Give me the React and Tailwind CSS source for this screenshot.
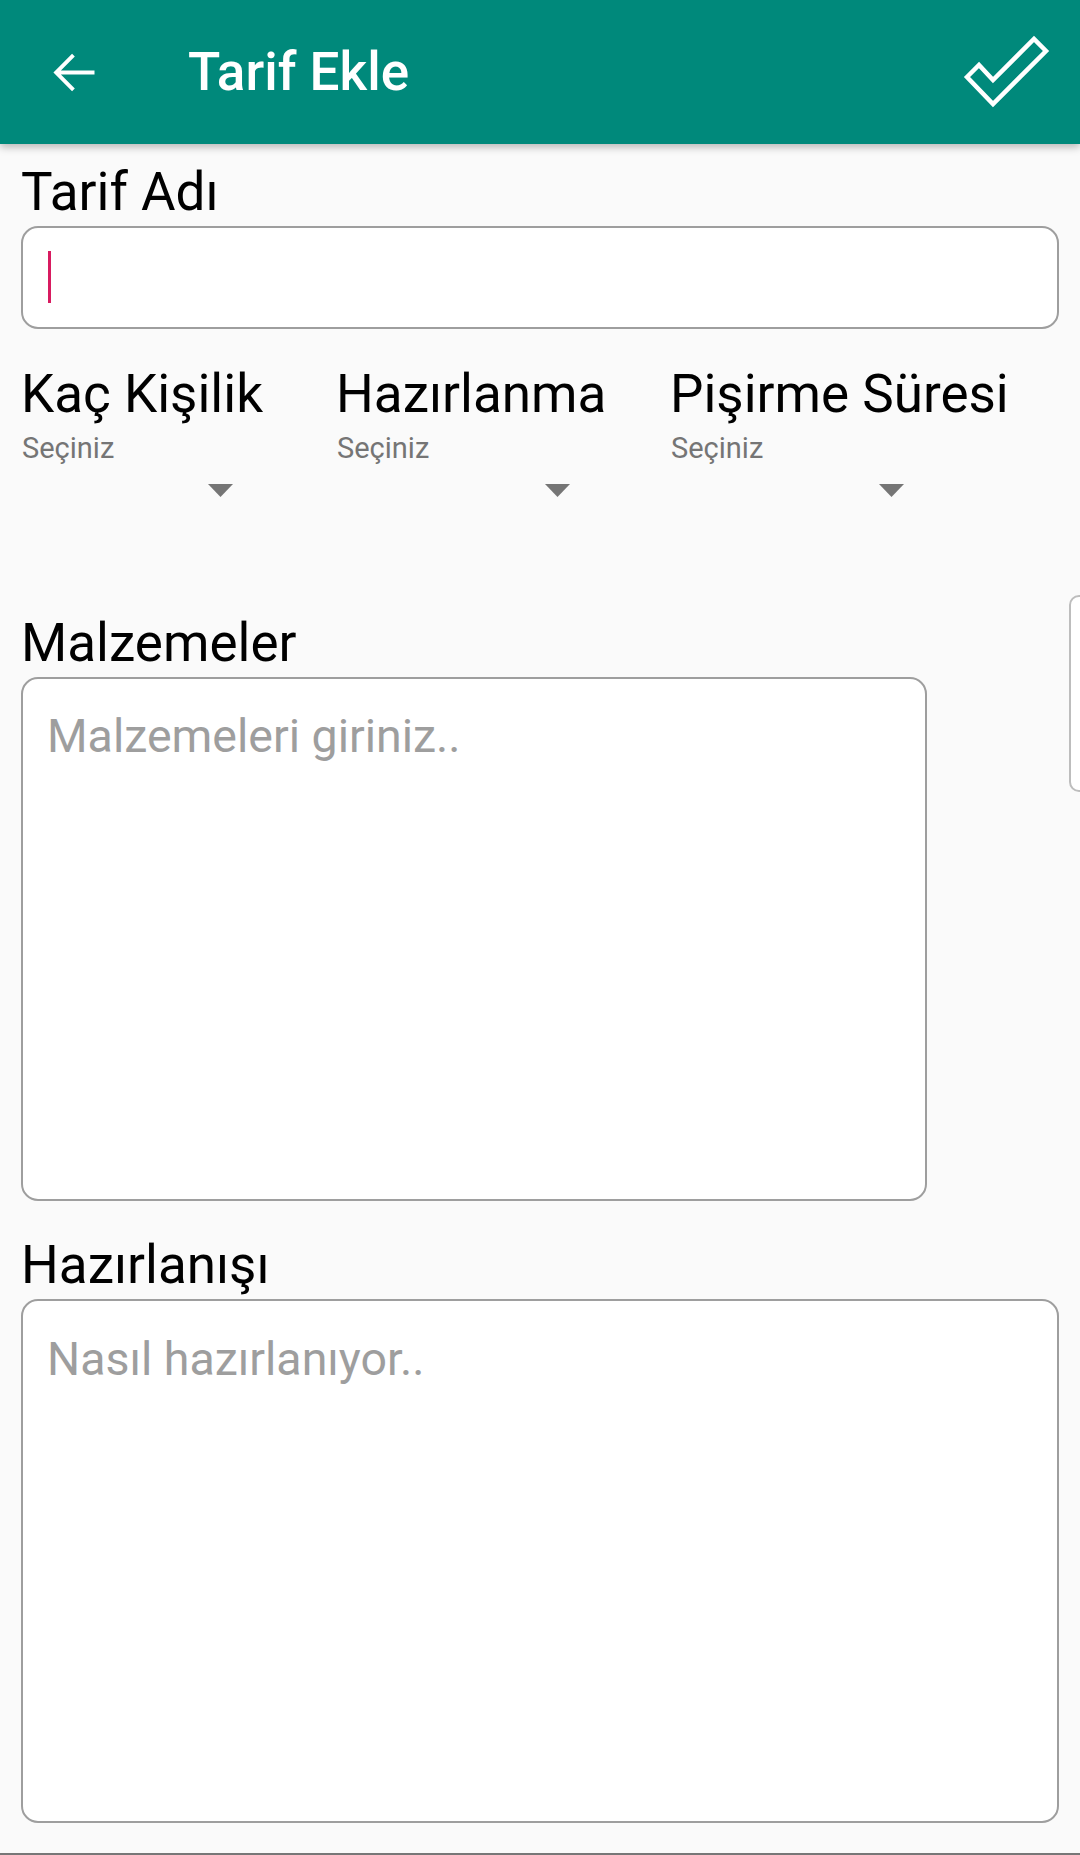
/**
 * App.jsx — Tarif Ekle (add recipe) screen
 */

const SPINNERS = [
  { label: 'Kaç Kişilik', col: 'w-[315px]', arrow: 'w-[212px]' },
  { label: 'Hazırlanma', col: 'w-[334px]', arrow: 'w-[234px]' },
  { label: 'Pişirme Süresi', col: 'flex-1', arrow: 'w-[234px]' },
];

function BackArrow() {
  return (
    <svg width="63" height="63" viewBox="0 0 24 24" fill="#ffffff">
      <path d="M20 11.25H7.2l5.3-5.3L11.45 4.9 4.35 12l7.1 7.1 1.05-1.05-5.3-5.3H20v-1.5z" />
    </svg>
  );
}

function CheckIcon() {
  return (
    <svg width="100" height="85" viewBox="955 30 100 85" fill="none">
      <polygon
        points="967,77 979,65 993,80 1034,39 1046,51 993,104"
        stroke="#ffffff"
        strokeWidth="4.5"
        strokeLinejoin="miter"
      />
    </svg>
  );
}

function DropArrow() {
  return (
    <svg width="25" height="13" viewBox="0 0 25 13">
      <polygon points="0,0 25,0 12.5,13" fill="#757575" />
    </svg>
  );
}

export default function App() {
  return (
    <div className="relative h-[1855px] overflow-hidden bg-[#fafafa] font-['Roboto','Liberation_Sans',sans-serif] flex flex-col">
      {/* toolbar */}
      <header className="relative z-10 h-[144px] shrink-0 bg-[#00897b] flex items-center pl-[42px] shadow-[0_3px_8px_rgba(0,0,0,0.28)]">
        <BackArrow />
        <h1 className="ml-[83px] text-[53px] leading-[61px] font-medium text-white">Tarif Ekle</h1>
        <div className="ml-auto mr-[25px] flex">
          <CheckIcon />
        </div>
      </header>

      <main className="px-[18px] flex flex-col">
        <label className="mt-[18px] ml-[3px] text-[53px] leading-[61px] text-black">Tarif Adı</label>
        <div className="mt-[3px] mx-[3px] h-[103px] rounded-[17px] border-2 border-[#9e9e9e] bg-white pl-[25px] pt-[23px]">
          <div className="w-[3px] h-[52px] bg-[#d81b60]" />
        </div>

        <div className="mt-[35px] ml-[3px] flex">
          {SPINNERS.map((s) => (
            <div key={s.label} className={`${s.col} flex flex-col`}>
              <span className="text-[53px] leading-[61px] text-black whitespace-nowrap">{s.label}</span>
              <span className="mt-[7px] pl-[1px] text-[29px] leading-[33px] text-[#757575]">Seçiniz</span>
              <div className={`${s.arrow} mt-[19px] flex justify-end`}>
                <DropArrow />
              </div>
            </div>
          ))}
        </div>

        <label className="mt-[116px] ml-[3px] text-[53px] leading-[61px] text-black">Malzemeler</label>
        <div className="mt-[3px] ml-[3px] w-[906px] h-[524px] rounded-[17px] border-2 border-[#9e9e9e] bg-white pl-[24px] pt-[30px]">
          <span className="text-[46.5px] leading-[55px] text-[#9e9e9e]">Malzemeleri giriniz..</span>
        </div>

        <label className="mt-[34px] ml-[3px] text-[53px] leading-[61px] text-black">Hazırlanışı</label>
        <div className="mt-[3px] mx-[3px] h-[524px] rounded-[17px] border-2 border-[#9e9e9e] bg-white pl-[24px] pt-[31px]">
          <span className="text-[46.5px] leading-[55px] text-[#9e9e9e]">Nasıl hazırlanıyor..</span>
        </div>
      </main>

      {/* side panel peeking in from the right edge */}
      <div className="absolute left-[1069px] top-[595px] w-[80px] h-[197px] rounded-[10px] border-2 border-[#bdbdbd] bg-white" />

      <div className="mt-auto h-[2px] bg-[#777777]" />
    </div>
  );
}
